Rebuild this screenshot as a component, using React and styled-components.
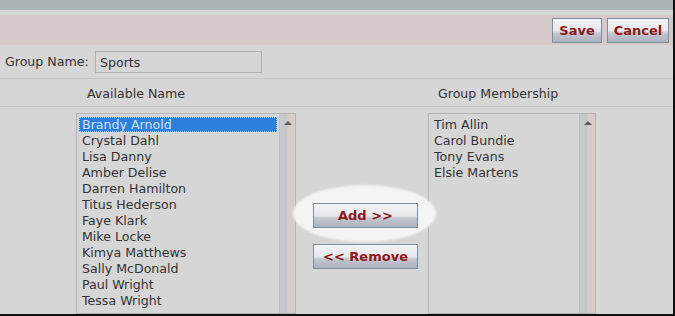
import React from 'react';
import styled, { createGlobalStyle } from 'styled-components';

const GlobalStyle = createGlobalStyle`
	html, body {
		margin: 0;
		padding: 0;
		background: #d6d6d6;
	}
`;

const Frame = styled.div`
	width: 675px;
	height: 316px;
	box-sizing: border-box;
	border-right: 2px solid #111;
	border-bottom: 2px solid #111;
	background: #d6d6d6;
	font-family: 'DejaVu Sans', Verdana, sans-serif;
	color: #333;
	overflow: hidden;
	display: flex;
	flex-direction: column;
`;

const TopBar = styled.div`
	height: 10px;
	background: #a8b4b6;
	flex: none;
`;

const Toolbar = styled.div`
	margin-top: 5px;
	height: 30px;
	background: #d4c9c8;
	display: flex;
	justify-content: flex-end;
	align-items: center;
	gap: 5px;
	padding-right: 4px;
	flex: none;
`;

const Button = styled.button`
	box-sizing: border-box;
	height: 25px;
	width: ${props => props.width}px;
	padding: 0;
	border: 1px solid #7d8f99;
	background: linear-gradient(
		to bottom,
		#f3f3f5 0%,
		#e6e7ec 52%,
		#c5c8d2 60%,
		#adb1bf 100%
	);
	color: #8e1818;
	font-family: 'DejaVu Sans', Verdana, sans-serif;
	font-weight: bold;
	font-size: 13px;
	line-height: 23px;
	text-align: center;
	cursor: pointer;
	position: relative;
	z-index: 2;
`;

const FormRow = styled.div`
	height: 33px;
	border-bottom: 1px solid #c3c7c7;
	display: flex;
	align-items: center;
	padding-left: 5px;
	flex: none;
`;

const Label = styled.label`
	font-size: 12.6px;
	width: 90px;
`;

const TextInput = styled.input`
	box-sizing: border-box;
	width: 167px;
	height: 22px;
	margin-top: 1px;
	border: 1px solid #b0b0b0;
	background: #d6d6d6;
	font-family: 'DejaVu Sans', Verdana, sans-serif;
	font-size: 12.6px;
	color: #333;
	padding: 0 4px;
	outline: none;
`;

const HeaderRow = styled.div`
	height: 27px;
	border-bottom: 1px solid #c3c7c7;
	display: grid;
	grid-template-columns: 272px 1fr;
	align-items: center;
	font-size: 12.6px;
	flex: none;
`;

const HeaderCell = styled.div`
	text-align: ${props => (props.left ? 'left' : 'center')};
	padding-left: ${props => props.indent || 0}px;
	padding-top: 1px;
`;

const ListsArea = styled.div`
	flex: 1;
	display: flex;
	padding: 6px 0 0 76px;
	min-height: 0;
`;

const ListBox = styled.div`
	box-sizing: border-box;
	width: ${props => props.width}px;
	height: 100%;
	border: 1px solid #b4b4b4;
	display: flex;
`;

const Items = styled.ul`
	list-style: none;
	margin: 0;
	padding: 3px 2px 0 2px;
	flex: 1;
	font-size: 12.6px;
`;

const Item = styled.li`
	box-sizing: border-box;
	line-height: 15px;
	padding-left: 3px;
	white-space: nowrap;
	color: ${props => (props.selected ? '#cfe0f2' : '#333')};
	background: ${props => (props.selected ? '#2c80dc' : 'transparent')};
	outline: ${props => (props.selected ? '1px dotted #9cc4f0' : 'none')};
	outline-offset: -1px;
	margin-bottom: ${props => (props.selected ? '1px' : '0')};
	height: ${props => (props.selected ? '15px' : '16px')};
`;

const ScrollTrack = styled.div`
	width: 16px;
	flex: none;
	border-left: 1px solid #bcc0c2;
	background: linear-gradient(
		to right,
		#c7cacb 0%,
		#c3c7c9 45%,
		#d6cdcb 55%,
		#d6cdcb 100%
	);
	display: flex;
	justify-content: center;
	padding-top: 7px;
	box-sizing: border-box;
`;

const Arrow = styled.div`
	width: 0;
	height: 0;
	border-left: 4px solid transparent;
	border-right: 4px solid transparent;
	border-bottom: 4px solid #5e5e5e;
`;

const Middle = styled.div`
	width: 132px;
	flex: none;
	box-sizing: border-box;
	padding: 90px 0 0 17px;
	display: flex;
	flex-direction: column;
	gap: 16px;
`;

const Spot = styled.div`
	position: relative;
	width: 105px;

	&::before {
		content: '';
		position: absolute;
		left: -20px;
		top: -18px;
		width: 143px;
		height: 57px;
		border-radius: 50%;
		background: #f4f4f4;
		filter: blur(1.2px);
		z-index: 1;
	}
`;

const available = [
	'Brandy Arnold',
	'Crystal Dahl',
	'Lisa Danny',
	'Amber Delise',
	'Darren Hamilton',
	'Titus Hederson',
	'Faye Klark',
	'Mike Locke',
	'Kimya Matthews',
	'Sally McDonald',
	'Paul Wright',
	'Tessa Wright'
];

const members = ['Tim Allin', 'Carol Bundie', 'Tony Evans', 'Elsie Martens'];

const NameList = ({ names, width, selected }) => (
	<ListBox width={width}>
		<Items>
			{names.map(name => (
				<Item key={name} selected={name === selected}>
					{name}
				</Item>
			))}
		</Items>
		<ScrollTrack>
			<Arrow />
		</ScrollTrack>
	</ListBox>
);

const App = () => {
	return (
		<Frame>
			<GlobalStyle />
			<TopBar />
			<Toolbar>
				<Button width={50}>Save</Button>
				<Button width={62}>Cancel</Button>
			</Toolbar>
			<FormRow>
				<Label>Group Name:</Label>
				<TextInput defaultValue="Sports" />
			</FormRow>
			<HeaderRow>
				<HeaderCell>Available Name</HeaderCell>
				<HeaderCell left indent={166}>
					Group Membership
				</HeaderCell>
			</HeaderRow>
			<ListsArea>
				<NameList names={available} width={220} selected="Brandy Arnold" />
				<Middle>
					<Spot>
						<Button width={105}>Add &gt;&gt;</Button>
					</Spot>
					<Button width={105}>&lt;&lt; Remove</Button>
				</Middle>
				<NameList names={members} width={168} />
			</ListsArea>
		</Frame>
	);
};

export default App;
